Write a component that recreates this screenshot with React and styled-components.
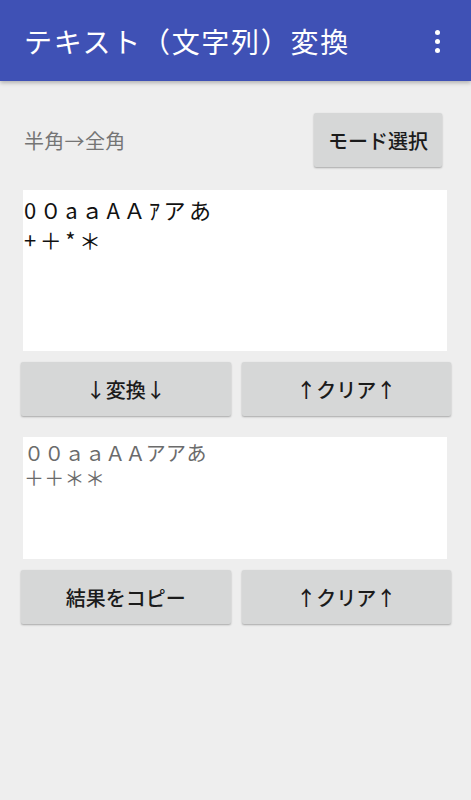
import styled, { createGlobalStyle } from 'styled-components'

const GlobalStyle = createGlobalStyle`
  html, body {
    margin: 0;
    padding: 0;
    background: #eeeeee;
  }
  body {
    font-family: 'Noto Sans CJK JP', 'Roboto', sans-serif;
  }
`

const Page = styled.div`
  width: 471px;
  min-height: 800px;
  background: #eeeeee;
`

const AppBar = styled.header`
  height: 81px;
  background: #3f51b5;
  display: flex;
  align-items: center;
  justify-content: space-between;
  padding: 0 31px 0 24px;
  box-shadow: 0 2px 4px rgba(0, 0, 0, 0.25);
  position: relative;
`

const Title = styled.h1`
  margin: 0;
  color: #ffffff;
  font-size: 28px;
  font-weight: 400;
  letter-spacing: 1.7px;
  line-height: 1;
`

const Overflow = styled.div`
  display: flex;
  flex-direction: column;
  gap: 4px;
  padding-top: 2px;
`

const Dot = styled.span`
  width: 5px;
  height: 5px;
  border-radius: 50%;
  background: #ffffff;
`

const Main = styled.main`
  padding: 32px 20px 0 21px;
`

const TopRow = styled.div`
  display: flex;
  align-items: center;
  justify-content: space-between;
  padding: 0 9px 0 3px;
`

const ModeLabel = styled.span`
  color: #757575;
  font-size: 20px;
  letter-spacing: 0.3px;
`

const Button = styled.button`
  height: 54px;
  padding: 0 14px;
  border: none;
  border-radius: 2px;
  background: #d6d7d7;
  color: #1b1b1b;
  font-family: 'Noto Sans CJK JP', sans-serif;
  font-size: 20px;
  font-weight: 500;
  box-shadow: 0 1px 2px rgba(0, 0, 0, 0.3);
  flex: ${p => (p.$grow ? 1 : 'none')};
`

const TextBox = styled.div`
  margin: ${p => p.$top}px 4px 0 2px;
  height: ${p => p.$height}px;
  background: #ffffff;
  padding: ${p => p.$pad}px 1px 0;
  box-sizing: border-box;
  color: ${p => p.$color};
  font-size: ${p => p.$size}px;
  line-height: ${p => p.$lh}px;
  letter-spacing: ${p => p.$ls}px;
  white-space: pre;
`

const ButtonRow = styled.div`
  display: flex;
  gap: 11px;
  margin-top: 11px;
`

export default function App() {
  return (
    <Page>
      <GlobalStyle />
      <AppBar>
        <Title>テキスト（文字列）変換</Title>
        <Overflow>
          <Dot />
          <Dot />
          <Dot />
        </Overflow>
      </AppBar>
      <Main>
        <TopRow>
          <ModeLabel>半角→全角</ModeLabel>
          <Button>モード選択</Button>
        </TopRow>
        <TextBox $top={23} $height={161} $pad={4} $color="#111111" $size={22} $lh={30} $ls={3.5}>
          {'0０aａAＡｱアあ\n+＋*＊'}
        </TextBox>
        <ButtonRow>
          <Button $grow>↓変換↓</Button>
          <Button $grow>↑クリア↑</Button>
        </ButtonRow>
        <TextBox $top={21} $height={122} $pad={3} $color="#6b6b6b" $size={20} $lh={25} $ls={0.3}>
          {'００ａａＡＡアアあ\n＋＋＊＊'}
        </TextBox>
        <ButtonRow>
          <Button $grow>結果をコピー</Button>
          <Button $grow>↑クリア↑</Button>
        </ButtonRow>
      </Main>
    </Page>
  )
}
